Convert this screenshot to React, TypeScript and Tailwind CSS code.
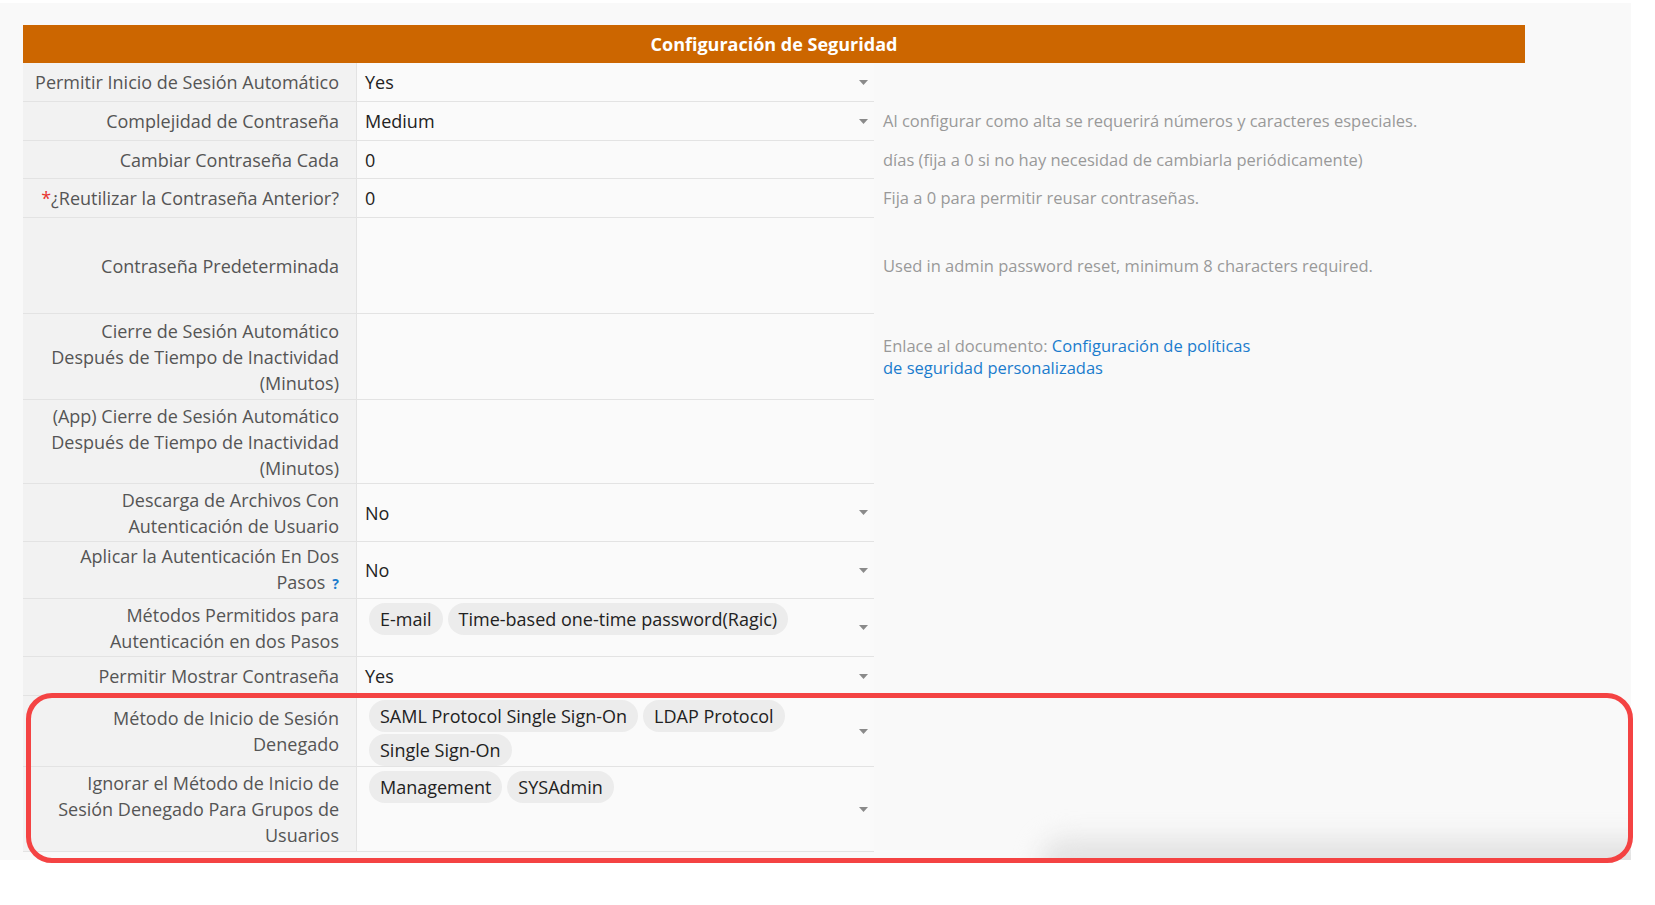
import React from 'react';

type Row = {
  label: string[];
  height: string;
  value?: string;
  select?: boolean;
  tags?: string[];
  help?: React.ReactNode;
  required?: boolean;
  hint?: boolean;
};

const rows: Row[] = [
  { label: ['Permitir Inicio de Sesión Automático'], height: 'h-[39px]', value: 'Yes', select: true },
  {
    label: ['Complejidad de Contraseña'],
    height: 'h-[39px]',
    value: 'Medium',
    select: true,
    help: 'Al configurar como alta se requerirá números y caracteres especiales.'
  },
  {
    label: ['Cambiar Contraseña Cada'],
    height: 'h-[38px]',
    value: '0',
    help: 'días (fija a 0 si no hay necesidad de cambiarla periódicamente)'
  },
  {
    label: ['¿Reutilizar la Contraseña Anterior?'],
    height: 'h-[39px]',
    value: '0',
    required: true,
    help: 'Fija a 0 para permitir reusar contraseñas.'
  },
  {
    label: ['Contraseña Predeterminada'],
    height: 'h-[96px]',
    help: 'Used in admin password reset, minimum 8 characters required.'
  },
  {
    label: ['Cierre de Sesión Automático', 'Después de Tiempo de Inactividad', '(Minutos)'],
    height: 'h-[86px]',
    help: (
      <span className="leading-[22px]">
        Enlace al documento: <a className="text-[#1b7ccd]">Configuración de políticas</a>
        <br />
        <a className="text-[#1b7ccd]">de seguridad personalizadas</a>
      </span>
    )
  },
  {
    label: ['(App) Cierre de Sesión Automático', 'Después de Tiempo de Inactividad', '(Minutos)'],
    height: 'h-[84px]'
  },
  {
    label: ['Descarga de Archivos Con', 'Autenticación de Usuario'],
    height: 'h-[58px]',
    value: 'No',
    select: true
  },
  {
    label: ['Aplicar la Autenticación En Dos', 'Pasos'],
    height: 'h-[57px]',
    value: 'No',
    select: true,
    hint: true
  },
  {
    label: ['Métodos Permitidos para', 'Autenticación en dos Pasos'],
    height: 'h-[58px]',
    tags: ['E-mail', 'Time-based one-time password(Ragic)']
  },
  { label: ['Permitir Mostrar Contraseña'], height: 'h-[39px]', value: 'Yes', select: true },
  {
    label: ['Método de Inicio de Sesión', 'Denegado'],
    height: 'h-[71px]',
    tags: ['SAML Protocol Single Sign-On', 'LDAP Protocol', 'Single Sign-On']
  },
  {
    label: ['Ignorar el Método de Inicio de', 'Sesión Denegado Para Grupos de', 'Usuarios'],
    height: 'h-[85px]',
    tags: ['Management', 'SYSAdmin']
  }
];

const Caret = () => (
  <svg width="9" height="5" viewBox="0 0 9 5" className="shrink-0 self-center">
    <polygon points="0,0 9,0 4.5,5" fill="#8a8a8a" />
  </svg>
);

export default function App() {
  return (
    <div className="relative min-h-screen bg-white pt-[3px] font-['Open_Sans',sans-serif]">
      <div className="relative h-[857px] w-[1631px] overflow-hidden bg-[#f9f9f9] pl-[23px] pt-[22px]">
        <div className="flex h-[38px] w-[1502px] items-center justify-center bg-[#cc6600] text-[18px] font-bold text-white">
          Configuración de Seguridad
        </div>

        <div className="flex flex-col">
          {rows.map((row, i) => (
            <div key={i} className={`flex ${row.height}`}>
              <div className="flex w-[333px] shrink-0 flex-col items-end justify-center border-b border-[#e3e3e3] bg-[#f2f2f2] pr-[17px] text-[18px] leading-[26px] text-[#555]">
                {row.label.map((line, j) => (
                  <span key={j} className="whitespace-nowrap">
                    {row.required && j === 0 && <span className="text-[#e8322f]">*</span>}
                    {line}
                    {row.hint && j === row.label.length - 1 && (
                      <span className="ml-[7px] text-[14px] font-bold text-[#1b7ccd]">?</span>
                    )}
                  </span>
                ))}
              </div>

              <div className="flex w-[518px] shrink-0 border-b border-l border-[#e3e3e3] bg-[#fafafa] pr-[6px] text-[18px] leading-[26px] text-[#222]">
                {row.tags ? (
                  <div className="flex flex-1 flex-wrap content-start gap-x-[5px] gap-y-[2px] pl-[12px] pr-[20px] pt-[4px]">
                    {row.tags.map(tag => (
                      <span key={tag} className="flex h-[32px] items-center rounded-full bg-[#ececec] px-[11px] whitespace-nowrap">
                        {tag}
                      </span>
                    ))}
                  </div>
                ) : (
                  <div className="flex flex-1 items-center pl-[8px]">{row.value}</div>
                )}
                {(row.select || row.tags) && <Caret />}
              </div>

              <div className="flex flex-1 items-center pl-[9px] text-[16.5px] text-[#999]">{row.help}</div>
            </div>
          ))}
        </div>

        <div className="absolute bottom-[-30px] left-[1040px] right-[-40px] h-[52px] rounded-[40px] bg-[#e3e3e3] blur-[12px]" />
      </div>

      <div className="pointer-events-none absolute left-[26px] top-[693px] h-[170px] w-[1607px] rounded-[26px] border-[5px] border-[#f44343]" />
    </div>
  );
}
